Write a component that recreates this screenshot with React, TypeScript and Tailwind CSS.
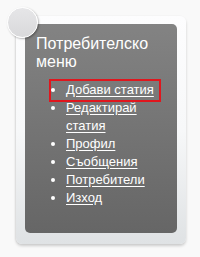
const items = ['Добави статия', 'Редактирай статия', 'Профил', 'Съобщения', 'Потребители', 'Изход'];

export default function App() {
  return (
    <div className="w-[200px] h-[257px] bg-[#f9f9f9] pt-4 pl-4 font-['Liberation_Sans',Arial,sans-serif]">
      {/* outer card */}
      <div className="relative w-[170px] rounded-[6px] bg-gradient-to-b from-[#fdfdfe] via-[#f7f8f9] to-[#dfe2e4] pt-2 pl-[9px] pr-[9px] pb-[11px] shadow-[0_2px_3px_rgba(0,0,0,0.18),-1px_0_2px_rgba(0,0,0,0.06)]">
        <div className="rounded-[5px] bg-gradient-to-b from-[#838383] to-[#666666] pt-[11px] pl-[11px] pb-[26px]">
          <h2 className="text-[16px] leading-[18px] text-white">Потребителско меню</h2>
          <ul className="mt-[10px] list-disc pl-[30px] text-[13px] leading-[18px] text-white marker:text-white">
            {items.map((item, i) => (
              <li key={item} className="relative pr-[14px]">
                {i === 0 && (
                  <span className="absolute -left-[17px] -top-[2px] h-[23px] w-[112px] border-2 border-[#e0161d]" />
                )}
                <a href="#" className="underline underline-offset-[2px]">{item}</a>
              </li>
            ))}
          </ul>
        </div>
        {/* round badge over the corner */}
        <div className="absolute -left-[9px] -top-[9px] h-[31px] w-[31px] rounded-full border-[1.5px] border-white bg-gradient-to-b from-[#e6e6e8] to-[#d9d9db] shadow-[1px_1px_2px_rgba(0,0,0,0.3)]" />
      </div>
    </div>
  );
}
